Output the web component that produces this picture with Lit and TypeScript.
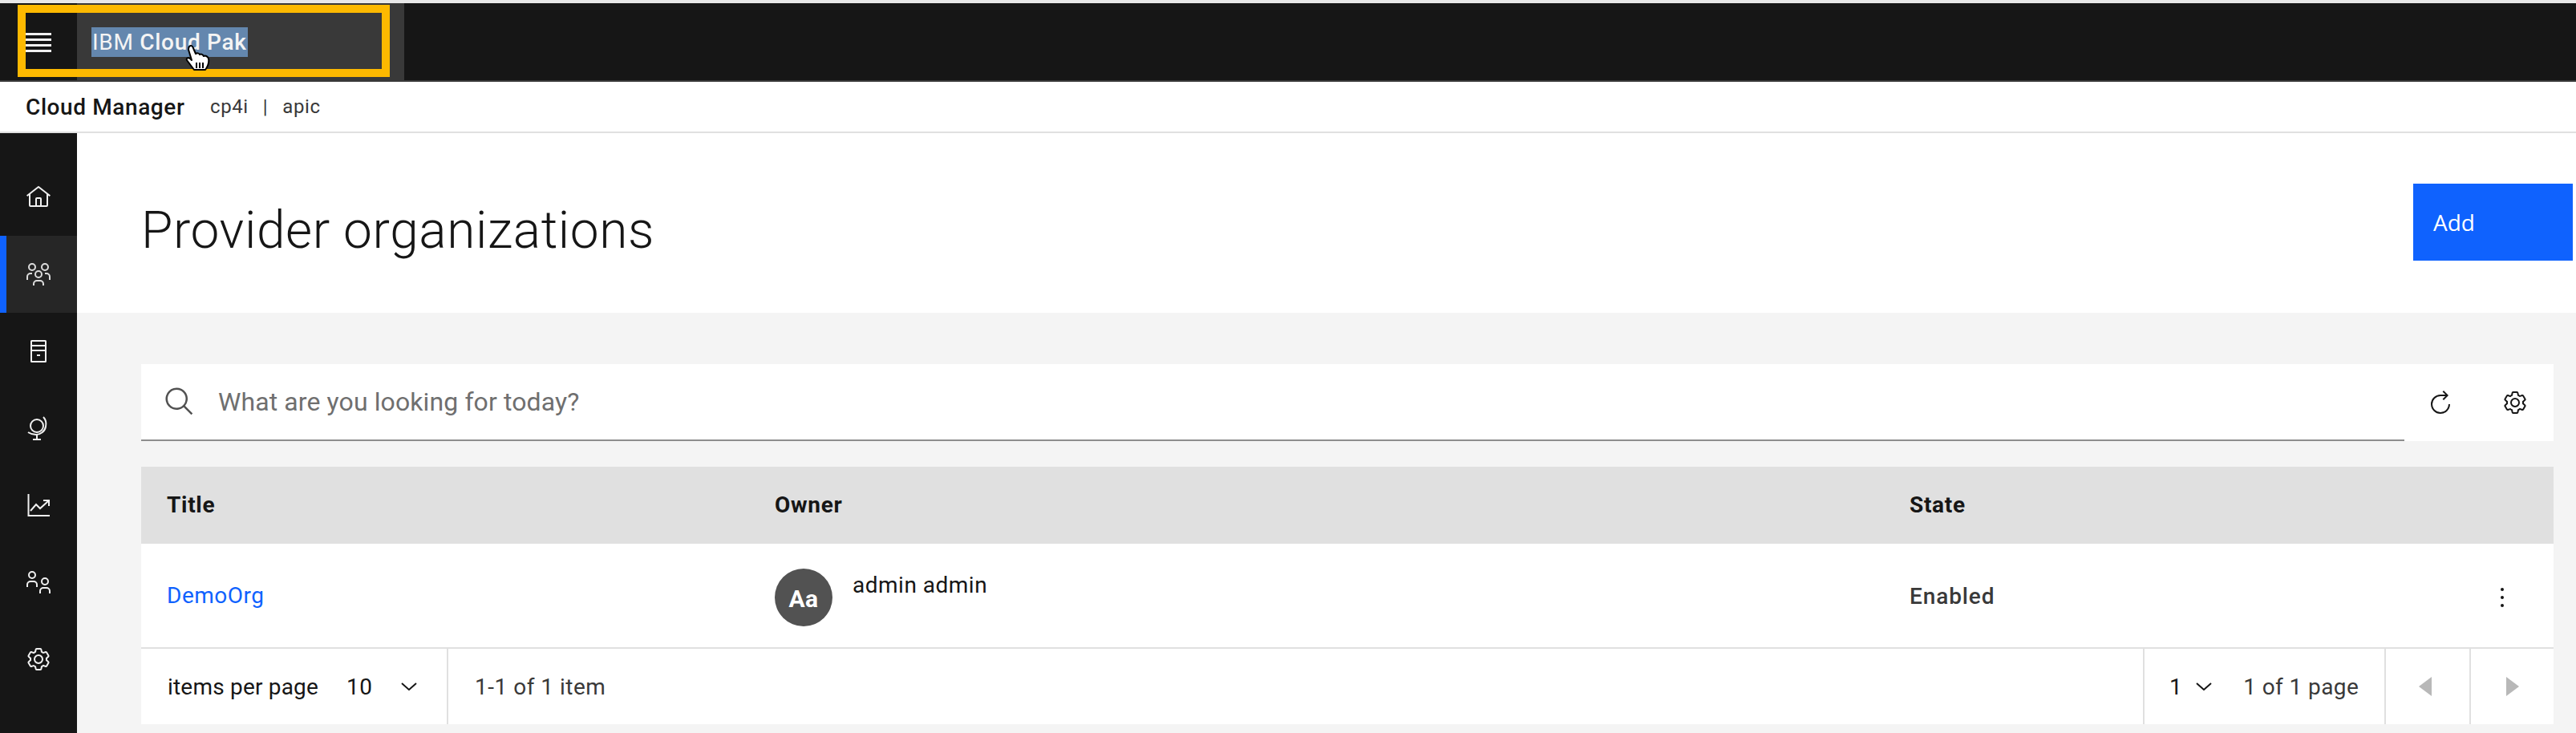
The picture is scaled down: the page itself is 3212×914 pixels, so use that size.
import { css, html, svg, LitElement } from "lit";
import { customElement } from "lit/decorators.js";

const gear = svg`<path d="M27,16.76c0-.25,0-.5,0-.76s0-.51,0-.77l1.92-1.68A2,2,0,0,0,29.3,11L26.94,7a2,2,0,0,0-1.73-1,2,2,0,0,0-.64.1l-2.43.82a11.35,11.35,0,0,0-1.31-.75l-.51-2.52a2,2,0,0,0-2-1.61H13.64a2,2,0,0,0-2,1.61l-.51,2.52a11.48,11.48,0,0,0-1.32.75L7.43,6.06A2,2,0,0,0,6.79,6,2,2,0,0,0,5.06,7L2.7,11a2,2,0,0,0,.41,2.51L5,15.24c0,.25,0,.5,0,.76s0,.51,0,.77L3.11,18.45A2,2,0,0,0,2.7,21L5.06,25a2,2,0,0,0,1.73,1,2,2,0,0,0,.64-.1l2.43-.82a11.35,11.35,0,0,0,1.31.75l.51,2.52a2,2,0,0,0,2,1.61h4.72a2,2,0,0,0,2-1.61l.51-2.52a11.48,11.48,0,0,0,1.32-.75l2.42.82a2,2,0,0,0,.64.1,2,2,0,0,0,1.73-1L29.3,21a2,2,0,0,0-.41-2.51ZM25.21,24l-3.43-1.16a8.86,8.86,0,0,1-2.71,1.57L18.36,28H13.64l-.71-3.55a9.36,9.36,0,0,1-2.7-1.57L6.79,24,4.43,20l2.72-2.4a8.9,8.9,0,0,1,0-3.13L4.43,12,6.79,8l3.43,1.16a8.86,8.86,0,0,1,2.71-1.57L13.64,4h4.72l.71,3.55a9.36,9.36,0,0,1,2.7,1.57L25.21,8,27.57,12l-2.72,2.4a8.9,8.9,0,0,1,0,3.13L27.57,20Z"/><path d="M16,22a6,6,0,1,1,6-6A5.94,5.94,0,0,1,16,22Zm0-10a3.91,3.91,0,0,0-4,4,3.91,3.91,0,0,0,4,4,3.91,3.91,0,0,0,4-4A3.91,3.91,0,0,0,16,12Z"/>`;

const navIcons = [
  svg`<path d="M16.61,2.21a1,1,0,0,0-1.24,0L1,13.42,2.24,15,4,13.62V26a2,2,0,0,0,2,2H26a2,2,0,0,0,2-2V13.63L29.76,15,31,13.43ZM18,26H14V18h4Zm2,0V18a2,2,0,0,0-2-2H14a2,2,0,0,0-2,2v8H6V12.06L16,4.27l10,7.8V26Z"/>`,
  svg`<path d="M26,14H24v2h2a3.0033,3.0033,0,0,1,3,3v4h2V19A5.0058,5.0058,0,0,0,26,14Z"/><path d="M24,4a3,3,0,1,1-3,3,3,3,0,0,1,3-3m0-2a5,5,0,1,0,5,5A5,5,0,0,0,24,2Z"/><path d="M23,30H21V28a3.0033,3.0033,0,0,0-3-3H14a3.0033,3.0033,0,0,0-3,3v2H9V28a5.0058,5.0058,0,0,1,5-5h4a5.0058,5.0058,0,0,1,5,5Z"/><path d="M16,13a3,3,0,1,1-3,3,3,3,0,0,1,3-3m0-2a5,5,0,1,0,5,5A5,5,0,0,0,16,11Z"/><path d="M8,14H6a5.0058,5.0058,0,0,0-5,5v4H3V19a3.0033,3.0033,0,0,1,3-3H8Z"/><path d="M8,4A3,3,0,1,1,5,7,3,3,0,0,1,8,4M8,2a5,5,0,1,0,5,5A5,5,0,0,0,8,2Z"/>`,
  svg`<g fill="none" stroke="currentColor" stroke-width="2"><rect x="7" y="3" width="18" height="26" rx="0.5"/><path d="M7 9H25M7 15H25"/><path d="M14 21H18"/></g>`,
  svg`<g fill="none" stroke="currentColor" stroke-width="2"><circle cx="14" cy="13" r="8"/><path d="M22 2C25 5 26 9 25 14C24 20 18 24 13 24C9 24 6 23 3 21"/><path d="M14 24V30M9 30H19"/></g>`,
  svg`<g fill="none" stroke="currentColor" stroke-width="2"><path d="M3.5 2V29H30"/><path d="M6 23L13 15L18 20L29 10"/><path d="M22 10H29V17"/></g>`,
  svg`<g fill="none" stroke="currentColor" stroke-width="2"><circle cx="8" cy="7" r="4"/><path d="M2 22V19A4 4 0 0 1 6 15H10A4 4 0 0 1 14 19V22"/><circle cx="24" cy="15" r="4"/><path d="M18 30V27A4 4 0 0 1 22 23H26A4 4 0 0 1 30 27V30"/></g>`,
  gear,
];

@customElement("app-root")
export class AppRoot extends LitElement {
  static styles = css`
    :host {
      display: block;
      position: relative;
      width: 3212px;
      height: 914px;
      overflow: hidden;
      background: #fff;
      color: #161616;
      font-family: Roboto, sans-serif;
      font-size: 28px;
    }
    svg {
      display: block;
      fill: currentColor;
    }
    .topstrip {
      height: 4px;
      background: #e8e8e8;
    }
    .topbar {
      display: flex;
      height: 96px;
      background: #161616;
      border-bottom: 2px solid #393939;
    }
    .menu-btn {
      display: flex;
      flex-direction: column;
      gap: 4px;
      box-sizing: border-box;
      width: 96px;
      padding: 37px 0 0 32px;
    }
    .menu-btn span {
      display: block;
      width: 32px;
      height: 3px;
      background: #f0f0f0;
    }
    .brand {
      display: flex;
      box-sizing: border-box;
      width: 408px;
      padding: 30px 0 0 18px;
      background: #393939;
    }
    .brand-text {
      height: 37px;
      padding: 0 1px;
      line-height: 37px;
      background: #6487ae;
      color: #f4f4f4;
      white-space: nowrap;
      letter-spacing: 0.7px;
    }
    .brand-text b {
      font-weight: 500;
    }
    .subbar {
      display: flex;
      align-items: center;
      height: 62px;
      padding-left: 32px;
      border-bottom: 2px solid #e0e0e0;
    }
    .subbar b {
      width: 230px;
      font-weight: 500;
      letter-spacing: 0.6px;
    }
    .tenant {
      display: flex;
      gap: 18px;
      font-size: 24px;
      letter-spacing: 0.6px;
      color: #393939;
    }
    .layout {
      display: flex;
      height: 748px;
    }
    .sidenav {
      box-sizing: border-box;
      width: 96px;
      padding-top: 32px;
      background: #161616;
      color: #f0f0f0;
    }
    .nav-item {
      display: flex;
      align-items: center;
      justify-content: center;
      height: 96px;
    }
    .nav-item.active {
      background: #262626;
      box-shadow: inset 8px 0 0 #0f62fe;
      color: #dcdcdc;
    }
    .main {
      flex: 1;
      background: #f4f4f4;
    }
    .page-head {
      display: flex;
      align-items: center;
      justify-content: space-between;
      height: 224px;
      padding: 0 4px 0 80px;
      background: #fff;
    }
    h1 {
      margin: 0;
      padding-top: 18px;
      font-size: 64px;
      font-weight: 300;
      letter-spacing: 0.6px;
    }
    .add-btn {
      box-sizing: border-box;
      width: 199px;
      height: 96px;
      margin-top: -2px;
      padding: 0 0 0 25px;
      border: 0;
      background: #0f62fe;
      color: #fff;
      font-family: "Open Sans", sans-serif;
      font-size: 28px;
      text-align: left;
    }
    .content {
      width: 3008px;
      margin-left: 80px;
      padding-top: 64px;
    }
    .search {
      display: flex;
      height: 96px;
      background: #fff;
    }
    .search-input {
      display: flex;
      align-items: center;
      gap: 28px;
      box-sizing: border-box;
      width: 2822px;
      padding-left: 28px;
      border-bottom: 2px solid #8d8d8d;
      color: #6f6f6f;
      font-size: 32px;
      letter-spacing: 0.1px;
    }
    .search-input svg {
      color: #525252;
    }
    .tools {
      display: flex;
      flex: 1;
      align-items: center;
      gap: 60px;
      padding-left: 30px;
    }
    .thead,
    .trow {
      display: grid;
      grid-template-columns: 758px 1415px 1fr;
      align-items: center;
      padding-left: 32px;
    }
    .thead {
      height: 96px;
      margin-top: 32px;
      background: #e0e0e0;
      font-weight: 700;
      letter-spacing: 0.7px;
    }
    .thead span {
      margin-top: -2px;
    }
    .trow {
      position: relative;
      box-sizing: border-box;
      height: 131px;
      background: #fff;
      border-bottom: 2px solid #e0e0e0;
    }
    .link {
      color: #0f62fe;
      letter-spacing: 0.5px;
    }
    .owner {
      display: flex;
      align-items: flex-start;
      gap: 25px;
      margin-top: 4px;
      letter-spacing: 0.5px;
    }
    .owner-name {
      padding-top: 4px;
    }
    .avatar {
      display: flex;
      align-items: center;
      justify-content: center;
      width: 72px;
      height: 72px;
      padding-top: 4px;
      box-sizing: border-box;
      border-radius: 50%;
      background: #525252;
      color: #fff;
      font-size: 30px;
      font-weight: 700;
    }
    .state {
      margin-top: 2px;
      font-weight: 500;
      color: #393939;
      letter-spacing: 0.9px;
    }
    .kebab {
      position: absolute;
      right: 62px;
      top: 55px;
      display: flex;
      flex-direction: column;
      gap: 6px;
    }
    .kebab span {
      width: 4px;
      height: 4px;
      border-radius: 50%;
      background: #161616;
    }
    .pager {
      display: flex;
      height: 94px;
      background: #fff;
      letter-spacing: 0.5px;
    }
    .pager-cell {
      display: flex;
      align-items: center;
    }
    .per-page {
      box-sizing: border-box;
      width: 383px;
      padding-left: 33px;
      border-right: 2px solid #e0e0e0;
    }
    .per-label {
      letter-spacing: 0.2px;
    }
    .per-page .num {
      margin: 0 35px 0 35px;
    }
    .range {
      flex: 1;
      padding-left: 33px;
      color: #393939;
    }
    .page-select {
      box-sizing: border-box;
      width: 301px;
      padding-left: 31px;
      border-left: 2px solid #e0e0e0;
    }
    .page-select .of {
      margin-left: 39px;
      letter-spacing: 0.4px;
      color: #393939;
    }
    .page-select svg {
      margin-left: 17px;
    }
    .arrow {
      justify-content: center;
      box-sizing: border-box;
      width: 106px;
      padding-right: 6px;
      border-left: 2px solid #e0e0e0;
      color: #b8b8b8;
    }
    .arrow.next {
      width: 105px;
      padding-right: 0;
    }
    .annotation {
      position: absolute;
      left: 22px;
      top: 6px;
      box-sizing: border-box;
      width: 464px;
      height: 90px;
      border: 10px solid #fdb900;
    }
    .cursor {
      position: absolute;
      left: 230px;
      top: 55px;
    }
  `;

  render() {
    const chevron = html`<svg width="20" height="10" viewBox="0 0 20 10">
      <path d="M1 1L10 9L19 1" fill="none" stroke="currentColor" stroke-width="2" />
    </svg>`;
    return html`
      <div class="topstrip"></div>
      <header class="topbar">
        <div class="menu-btn"><span></span><span></span><span></span><span></span></div>
        <div class="brand">
          <span class="brand-text">IBM <b>Cloud Pak</b></span>
        </div>
      </header>
      <div class="subbar">
        <b>Cloud Manager</b>
        <div class="tenant"><span>cp4i</span><span>|</span><span>apic</span></div>
      </div>
      <div class="layout">
        <nav class="sidenav">
          ${navIcons.map(
            (icon, i) => html`<div class="nav-item ${i === 1 ? "active" : ""}">
              <svg width="32" height="32" viewBox="0 0 32 32">${icon}</svg>
            </div>`,
          )}
        </nav>
        <main class="main">
          <div class="page-head">
            <h1>Provider organizations</h1>
            <button class="add-btn">Add</button>
          </div>
          <div class="content">
            <div class="search">
              <div class="search-input">
                <svg width="40" height="40" viewBox="0 0 32 32">
                  <path
                    d="M29,27.5859l-7.5521-7.5521a11.0177,11.0177,0,1,0-1.4141,1.4141L27.5859,29ZM4,13a9,9,0,1,1,9,9A9.01,9.01,0,0,1,4,13Z"
                  />
                </svg>
                <span>What are you looking for today?</span>
              </div>
              <div class="tools">
                <svg width="32" height="32" viewBox="0 0 32 32">
                  <path
                    d="M25,18A10,10,0,1,1,15,8h6.17l-3.58,3.59L19,13l6-6L19,1,17.58,2.41,21.16,6H15A12,12,0,1,0,27,18Z"
                  />
                </svg>
                <svg width="32" height="32" viewBox="0 0 32 32">${gear}</svg>
              </div>
            </div>
            <div class="thead">
              <span>Title</span><span>Owner</span><span>State</span>
            </div>
            <div class="trow">
              <span class="link">DemoOrg</span>
              <div class="owner">
                <div class="avatar">Aa</div>
                <span class="owner-name">admin admin</span>
              </div>
              <span class="state">Enabled</span>
              <div class="kebab"><span></span><span></span><span></span></div>
            </div>
            <div class="pager">
              <div class="pager-cell per-page">
                <span class="per-label">items per page</span><span class="num">10</span>${chevron}
              </div>
              <div class="pager-cell range">1-1 of 1 item</div>
              <div class="pager-cell page-select">
                <span>1</span>${chevron}<span class="of">1 of 1 page</span>
              </div>
              <div class="pager-cell arrow">
                <svg width="16" height="24" viewBox="0 0 16 24"><path d="M16 0V24L0 12Z" /></svg>
              </div>
              <div class="pager-cell arrow next">
                <svg width="16" height="24" viewBox="0 0 16 24"><path d="M0 0V24L16 12Z" /></svg>
              </div>
            </div>
          </div>
        </main>
      </div>
      <div class="annotation"></div>
      <svg class="cursor" width="34" height="34" viewBox="0 0 34 34">
        <path
          d="M6 3C8 1 10 2 11 5L14 12C16 11 18 11 19 13C21 12 23 13 24 15C26 14 29 15 30 18C31 23 29 28 26 32H12C9 28 6 24 3 20C2 18 4 16 7 18L9 20L5 7C5 5 5 4 6 3Z"
          fill="#fff"
          stroke="#000"
          stroke-width="2"
          stroke-linejoin="round"
        />
        <path d="M15 23V30M19 23V30M23 23V30" stroke="#000" stroke-width="2" />
      </svg>
    `;
  }
}
